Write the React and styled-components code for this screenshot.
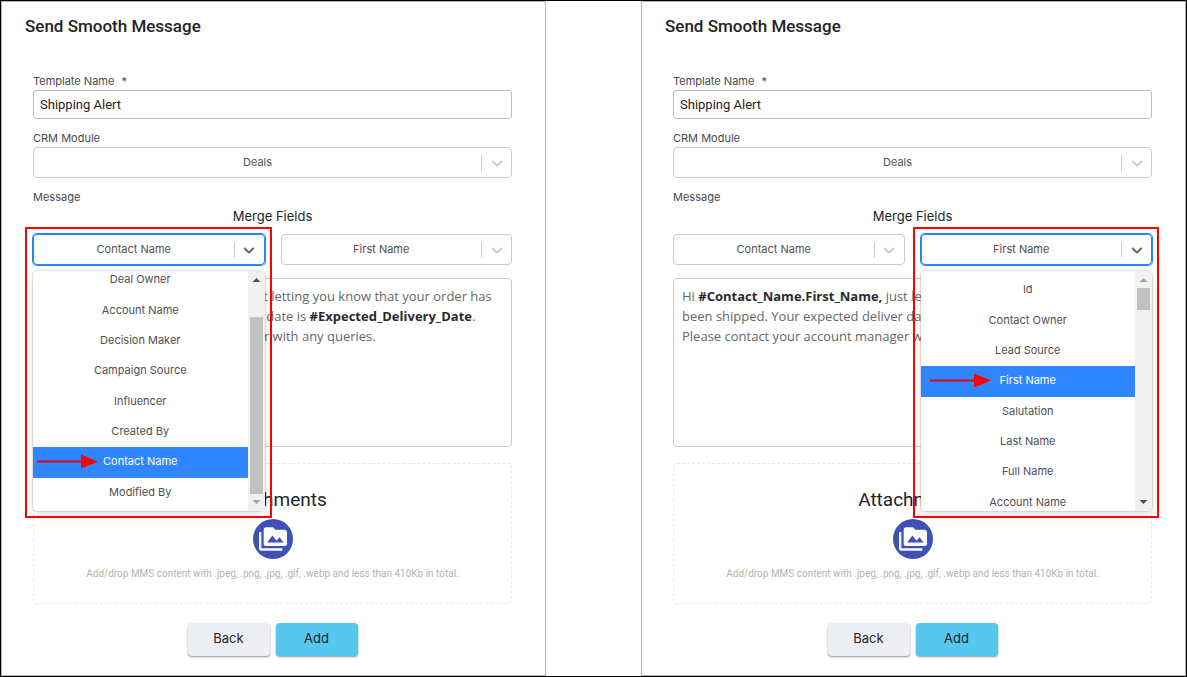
import React, { useState } from 'react';
import styled, { createGlobalStyle, css } from 'styled-components';
import { MdPermMedia } from 'react-icons/md';

const GlobalStyle = createGlobalStyle`
  * {
    box-sizing: border-box;
  }

  body {
    margin: 0;
    background: #fff;
    color: #212529;
    font-family: Inter, 'Open Sans', sans-serif;
  }
`;

const Page = styled.main`
  display: grid;
  grid-template-columns: 1fr 1fr;
  column-gap: 95px;
  min-height: 100vh;
  border: 1px solid #000;
`;

const Panel = styled.form`
  display: flex;
  flex-direction: column;
  padding: 12px 33px 18px 31px;
  border: 1px solid #b3b3b3;
`;

const Title = styled.h1`
  margin: 0 0 35px -8px;
  font: 500 17px/24px Roboto, sans-serif;
  color: #212529;
`;

const Label = styled.label`
  display: block;
  height: 17px;
  font-size: 11px;
  line-height: 16px;
  color: #4a4a4a;
`;

const Caption = styled.div`
  height: 28px;
  padding-top: 11px;
  font-size: 11px;
  line-height: 16px;
  color: #4a4a4a;
`;

const Required = styled.span`
  margin-left: 4px;
`;

const TextInput = styled.input`
  width: 100%;
  height: 29px;
  margin-bottom: 11px;
  padding: 0 6px 1px;
  border: 1px solid #bdbdbd;
  border-radius: 3px;
  font: 13px Roboto, sans-serif;
  color: #212529;
`;

const Control = styled.div`
  display: grid;
  grid-template-columns: 1fr 30px;
  align-items: center;
  height: 31px;
  border-radius: 4px;
  border: 1px solid #ccc;
  color: #ccc;

  ${({ $open }) =>
    $open &&
    css`
      border-color: #2684ff;
      box-shadow: 0 0 0 1px #2684ff;
      color: #666;
    `}
`;

const NativeSelect = styled.select`
  grid-area: 1 / 1 / 2 / 3;
  width: 100%;
  height: 29px;
  padding: 0 30px 2px 0;
  border: 0;
  outline: 0;
  appearance: none;
  background: transparent;
  font: 11px Inter, sans-serif;
  color: #505050;
  text-align: center;
  text-align-last: center;
`;

const Indicator = styled.span`
  grid-area: 1 / 2 / 2 / 3;
  display: flex;
  align-items: center;
  justify-content: center;
  height: 16px;
  border-left: 1px solid #ccc;
  pointer-events: none;
`;

const Subtitle = styled.h2`
  margin: 0 0 8px;
  font-size: 13px;
  font-weight: 400;
  line-height: 20px;
  text-align: center;
`;

const MergeRow = styled.div`
  display: grid;
  grid-template-columns: 1fr 1fr;
  gap: 16px;
  margin-bottom: 13px;
`;

const MergeField = styled.div`
  position: relative;
`;

const Menu = styled.div`
  position: absolute;
  z-index: 2;
  top: 37px;
  left: 0;
  right: 0;
  display: grid;
  grid-template-columns: 1fr 17px;
  height: 240px;
  overflow: hidden;
  border-radius: 4px;
  background: #fff;
  box-shadow: 0 0 0 1px rgba(0, 0, 0, 0.1), 0 4px 11px rgba(0, 0, 0, 0.1);
`;

const OptionClip = styled.div`
  display: flex;
  flex-direction: column;
  justify-content: ${({ $atEnd }) => ($atEnd ? 'flex-end' : 'flex-start')};
  height: 240px;
  padding: 4px 0 3px;
`;

const OptionList = styled.ul`
  flex: none;
  display: grid;
  grid-auto-rows: 1fr;
  height: 243px;
  margin: 0;
  padding: 0;
  list-style: none;
`;

const Option = styled.li`
  position: relative;
  display: flex;
  align-items: center;
  justify-content: center;
  padding-bottom: 2px;
  font-size: 11px;
  cursor: default;
  background: ${({ $selected }) => ($selected ? '#2f86ff' : 'transparent')};
  color: ${({ $selected }) => ($selected ? '#fff' : '#505050')};
`;

const Track = styled.div`
  display: flex;
  flex-direction: column;
  align-items: center;
  justify-content: ${({ $atEnd }) => ($atEnd ? 'flex-end' : 'flex-start')};
  position: relative;
  padding: 17px 0;
  background: #f1f1f1;
`;

const Thumb = styled.div`
  width: 13px;
  height: ${({ $size }) => $size}px;
  background: #c1c1c1;
`;

const TrackArrow = styled.svg`
  position: absolute;
  left: 4px;
  ${({ $down }) => ($down ? 'bottom: 7px;' : 'top: 7px;')}
  fill: ${({ $dim }) => ($dim ? '#a3a3a3' : '#505050')};
`;

const Callout = styled.div`
  position: absolute;
  z-index: 3;
  top: -7px;
  left: -8px;
  right: -7px;
  height: 291px;
  border: 2px solid #f00;
  pointer-events: none;
`;

const Pointer = styled.svg`
  position: absolute;
  left: ${({ $left }) => $left}px;
  top: 7px;
`;

const MessageBox = styled.div`
  height: 169px;
  margin-bottom: 16px;
  padding: 7px 8px;
  border: 1px solid #c8c8c8;
  border-radius: 4px;
  outline: 0;
  font-family: 'Open Sans', sans-serif;
  font-size: 13px;
  line-height: 20px;
  color: #666;

  p {
    margin: 0;
    white-space: nowrap;
  }

  b {
    font-weight: 700;
    color: #2b2b2b;
  }
`;

const DropZone = styled.section`
  display: flex;
  flex-direction: column;
  align-items: center;
  height: 141px;
  margin-bottom: 19px;
  padding-top: 24px;
  border: 1px dashed #e8e8e8;
  border-radius: 4px;
`;

const DropTitle = styled.h2`
  margin: 0 0 7px;
  font: 400 19px/24px Roboto, sans-serif;
`;

const UploadButton = styled.button`
  display: flex;
  align-items: center;
  justify-content: center;
  width: 40px;
  height: 40px;
  margin-bottom: 7px;
  padding: 0;
  border: 0;
  border-radius: 50%;
  background: #3f51b5;
  color: #fafafa;
`;

const Hint = styled.p`
  margin: 0;
  font: 10px/16px Roboto, sans-serif;
  color: #b3b3b3;
`;

const Actions = styled.div`
  display: flex;
  justify-content: center;
  gap: 6px;
`;

const Button = styled.button`
  min-width: 82px;
  height: 33px;
  padding: 0 0 3px;
  border: 0;
  border-radius: 4px;
  background: ${({ $primary }) => ($primary ? '#58c7ef' : '#eeeff4')};
  box-shadow: 0 1px 2px rgba(0, 0, 0, 0.45);
  font: 13px Inter, sans-serif;
  color: #212529;
`;

const CHEVRON =
  'M4.516 7.548c0.436-0.446 1.043-0.481 1.576 0l3.908 3.747 3.908-3.747c0.533-0.481 1.141-0.446 1.574 0 0.436 0.445 0.408 1.197 0 1.615-0.406 0.418-4.695 4.502-4.695 4.502-0.217 0.223-0.502 0.335-0.787 0.335s-0.57-0.112-0.789-0.335c0 0-4.287-4.084-4.695-4.502s-0.436-1.17 0-1.615z';

const moduleFields = [
  'Deal Owner',
  'Account Name',
  'Decision Maker',
  'Campaign Source',
  'Influencer',
  'Created By',
  'Contact Name',
  'Modified By',
];

const contactFields = [
  'Id',
  'Contact Owner',
  'Lead Source',
  'First Name',
  'Salutation',
  'Last Name',
  'Full Name',
  'Account Name',
];

function Select({ options, value, onChange, open, ...rest }) {
  return (
    <Control $open={open}>
      <NativeSelect value={value} onChange={(e) => onChange(e.target.value)} {...rest}>
        {options.map((name) => (
          <option key={name}>{name}</option>
        ))}
      </NativeSelect>
      <Indicator>
        <svg width="18" height="18" viewBox="0 0 20 20" fill="currentColor" aria-hidden="true">
          <path d={CHEVRON} />
        </svg>
      </Indicator>
    </Control>
  );
}

function MergeSelect({ label, options, value, onChange, open, atEnd, thumb, pointerLeft }) {
  return (
    <MergeField>
      <Select aria-label={label} options={options} value={value} onChange={onChange} open={open} />
      {open && (
        <>
          <Menu>
            <OptionClip $atEnd={atEnd}>
              <OptionList role="listbox" aria-label={label}>
                {options.map((name) => (
                  <Option
                    key={name}
                    role="option"
                    aria-selected={name === value}
                    $selected={name === value}
                    onClick={() => onChange(name)}
                  >
                    {name === value && (
                      <Pointer $left={pointerLeft} width="61" height="15" aria-hidden="true">
                        <path d="M0 7.5H46" stroke="#e3001b" strokeWidth="2" />
                        <path d="M44 0.5L61 7.5L44 14.5Z" fill="#f00" />
                      </Pointer>
                    )}
                    {name}
                  </Option>
                ))}
              </OptionList>
            </OptionClip>
            <Track $atEnd={atEnd}>
              <TrackArrow width="9" height="4" $dim={!atEnd}>
                <path d="M0.5 4L4.5 0L8.5 4Z" />
              </TrackArrow>
              <Thumb $size={thumb} />
              <TrackArrow width="9" height="4" $down $dim={atEnd}>
                <path d="M0.5 0L4.5 4L8.5 0Z" />
              </TrackArrow>
            </Track>
          </Menu>
          <Callout />
        </>
      )}
    </MergeField>
  );
}

function MessageForm({ id, openMenu }) {
  const [name, setName] = useState('Shipping Alert');
  const [module, setModule] = useState('Deals');
  const [field, setField] = useState('Contact Name');
  const [subField, setSubField] = useState('First Name');

  return (
    <Panel onSubmit={(e) => e.preventDefault()}>
      <Title>Send Smooth Message</Title>
      <Label htmlFor={`${id}-name`}>
        Template Name <Required>*</Required>
      </Label>
      <TextInput id={`${id}-name`} value={name} onChange={(e) => setName(e.target.value)} />
      <Label htmlFor={`${id}-module`}>CRM Module</Label>
      <Select id={`${id}-module`} options={['Deals']} value={module} onChange={setModule} />
      <Caption id={`${id}-message`}>Message</Caption>
      <Subtitle>Merge Fields</Subtitle>
      <MergeRow>
        <MergeSelect
          label="Module field"
          options={moduleFields}
          value={field}
          onChange={setField}
          open={openMenu === 'module'}
          atEnd
          thumb={177}
          pointerLeft={4}
        />
        <MergeSelect
          label="Contact field"
          options={contactFields}
          value={subField}
          onChange={setSubField}
          open={openMenu === 'contact'}
          thumb={22}
          pointerLeft={9}
        />
      </MergeRow>
      <MessageBox
        role="textbox"
        aria-multiline="true"
        aria-labelledby={`${id}-message`}
        contentEditable
        suppressContentEditableWarning
        spellCheck={false}
      >
        <p>
          Hi <b>#Contact_Name.First_Name,</b> just letting you know that your order has
        </p>
        <p>
          been shipped. Your expected deliver date is <b>#Expected_Delivery_Date</b>.
        </p>
        <p>Please contact your account manager with any queries.</p>
      </MessageBox>
      <DropZone>
        <DropTitle>Attachments</DropTitle>
        <UploadButton type="button" aria-label="Add attachment">
          <MdPermMedia size={28} />
        </UploadButton>
        <Hint>Add/drop MMS content with .jpeg, .png, .jpg, .gif, .webp and less than 410Kb in total.</Hint>
      </DropZone>
      <Actions>
        <Button type="button">Back</Button>
        <Button type="submit" $primary>
          Add
        </Button>
      </Actions>
    </Panel>
  );
}

function App() {
  return (
    <Page>
      <GlobalStyle />
      <MessageForm id="module" openMenu="module" />
      <MessageForm id="contact" openMenu="contact" />
    </Page>
  );
}

export default App;
